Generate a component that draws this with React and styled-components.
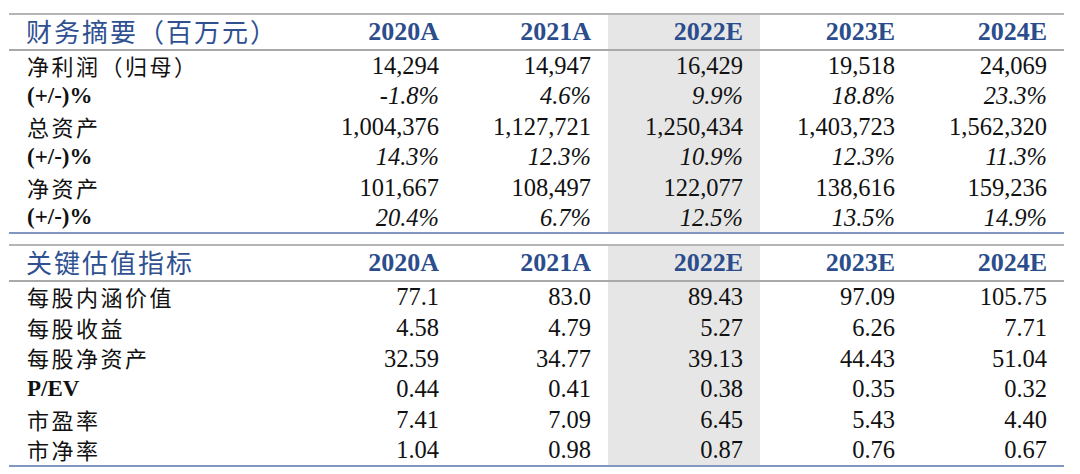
import React from 'react';
import styled, { createGlobalStyle } from 'styled-components';

const GlobalStyle = createGlobalStyle`
  body {
    margin: 0;
    background: #fff;
    font-family: "Liberation Serif", "Noto Sans CJK SC", serif;
  }
`;

const COLS = ['2020A', '2021A', '2022E', '2023E', '2024E'];
const SHADED = 2;

const finance = {
  title: '财务摘要（百万元）',
  rowHeight: 30.5,
  rows: [
    { label: '净利润（归母）', values: ['14,294', '14,947', '16,429', '19,518', '24,069'] },
    { label: '(+/-)%', latin: true, italic: true, values: ['-1.8%', '4.6%', '9.9%', '18.8%', '23.3%'] },
    { label: '总资产', values: ['1,004,376', '1,127,721', '1,250,434', '1,403,723', '1,562,320'] },
    { label: '(+/-)%', latin: true, italic: true, values: ['14.3%', '12.3%', '10.9%', '12.3%', '11.3%'] },
    { label: '净资产', values: ['101,667', '108,497', '122,077', '138,616', '159,236'] },
    { label: '(+/-)%', latin: true, italic: true, values: ['20.4%', '6.7%', '12.5%', '13.5%', '14.9%'] },
  ],
};

const valuation = {
  title: '关键估值指标',
  rowHeight: 30.8,
  rows: [
    { label: '每股内涵价值', values: ['77.1', '83.0', '89.43', '97.09', '105.75'] },
    { label: '每股收益', values: ['4.58', '4.79', '5.27', '6.26', '7.71'] },
    { label: '每股净资产', values: ['32.59', '34.77', '39.13', '44.43', '51.04'] },
    { label: 'P/EV', latin: true, values: ['0.44', '0.41', '0.38', '0.35', '0.32'] },
    { label: '市盈率', values: ['7.41', '7.09', '6.45', '5.43', '4.40'] },
    { label: '市净率', values: ['1.04', '0.98', '0.87', '0.76', '0.67'] },
  ],
};

export default function App() {
  return (
    <Page>
      <GlobalStyle />
      <Section data={finance} />
      <Section data={valuation} />
    </Page>
  );
}

function Section({ data }) {
  return (
    <Table>
      <colgroup>
        <col style={{ width: 295 }} />
        {COLS.map(c => <col key={c} style={{ width: 152 }} />)}
      </colgroup>
      <thead>
        <tr>
          <TitleCell>{data.title}</TitleCell>
          {COLS.map((c, i) => (
            <YearCell key={c} $shaded={i === SHADED}>{c}</YearCell>
          ))}
        </tr>
      </thead>
      <tbody>
        {data.rows.map((row, r) => (
          <Row key={r} $h={data.rowHeight}>
            <LabelCell $latin={row.latin}>{row.label}</LabelCell>
            {row.values.map((v, i) => (
              <ValueCell key={i} $shaded={i === SHADED} $italic={row.italic}>{v}</ValueCell>
            ))}
          </Row>
        ))}
      </tbody>
    </Table>
  );
}

/** Styled components */
const Page = styled.div`
  padding: 13px 0 0 9px;
  display: flex;
  flex-direction: column;
  gap: 10px;
`;

const Table = styled.table`
  width: 1055px;
  border-collapse: collapse;
  table-layout: fixed;
  border-top: 2px solid #b5b5b5;
  border-bottom: 2px solid #8197c1;

  thead tr {
    height: 36px;
    border-bottom: 2px solid #a9a9a9;
  }
`;

const TitleCell = styled.th`
  padding: 0 0 2px 17px;
  text-align: left;
  font-family: "Noto Sans CJK SC", sans-serif;
  font-weight: 400;
  font-size: 26px;
  letter-spacing: 2px;
  color: #2f5191;
  white-space: nowrap;
  line-height: 1.1;
`;

const YearCell = styled.th`
  padding: 0 17px 0 0;
  text-align: right;
  font-family: "Liberation Serif", serif;
  font-weight: 700;
  font-size: 26px;
  color: #2b4d8c;
  line-height: 1.1;
  background: ${p => (p.$shaded ? '#e6e6e6' : 'transparent')};
`;

const Row = styled.tr`
  height: ${p => p.$h}px;
`;

const LabelCell = styled.td`
  padding: 0 0 0 18px;
  font-family: ${p => (p.$latin ? '"Liberation Serif", serif' : '"Noto Sans CJK SC", sans-serif')};
  font-weight: ${p => (p.$latin ? 700 : 400)};
  font-size: ${p => (p.$latin ? '23px' : '22px')};
  letter-spacing: ${p => (p.$latin ? '0' : '2.5px')};
  color: #111;
  white-space: nowrap;
  line-height: 1.15;
`;

const ValueCell = styled.td`
  padding: 2px 17px 0 0;
  text-align: right;
  font-family: "Liberation Serif", serif;
  font-style: ${p => (p.$italic ? 'italic' : 'normal')};
  font-size: 24.5px;
  color: #111;
  line-height: 1.1;
  background: ${p => (p.$shaded ? '#e6e6e6' : 'transparent')};
`;
